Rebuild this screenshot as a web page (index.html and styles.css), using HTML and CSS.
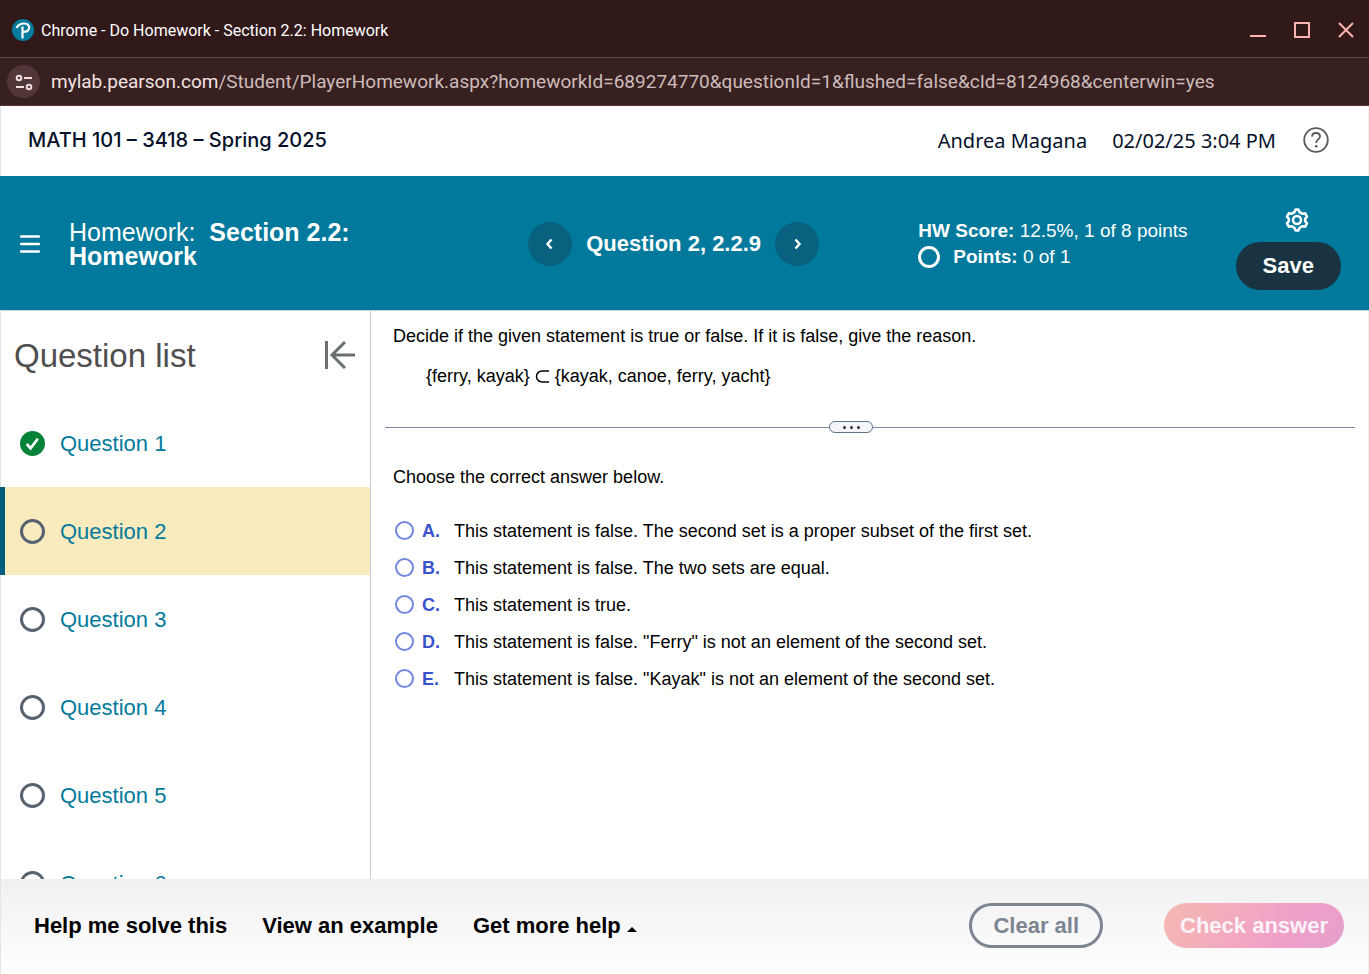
FILE: index.html
```html
<!DOCTYPE html>
<html lang="en">
<head>
    <meta charset="UTF-8">
    <meta name="viewport" content="width=device-width, initial-scale=1.0">
    <title>Do Homework - Section 2.2: Homework</title>
    <link rel="stylesheet" href="styles.css">
</head>
<body>
    <div class="titlebar">
        <svg class="logo" viewBox="0 0 22 22" aria-hidden="true">
            <circle cx="11" cy="11" r="11" fill="#047a9c"/>
            <path d="M10.500 19.500V7.500M4.500 9C6.500 5.500 9.500 4.300 12.500 4.500C15.800 4.800 17.300 6.600 17.100 9C16.900 11.600 14.500 13 11 12.700" fill="none" stroke="#fff" stroke-width="2.200"/>
        </svg>
        <span class="window-title">Chrome - Do Homework - Section 2.2: Homework</span>
        <button class="win-btn" aria-label="Minimize">
            <svg viewBox="0 0 16 16"><path d="M0 14H16" stroke-width="2"/></svg>
        </button>
        <button class="win-btn" aria-label="Maximize">
            <svg viewBox="0 0 16 16"><path d="M1 1H15V15H1Z" stroke-width="2"/></svg>
        </button>
        <button class="win-btn" aria-label="Close">
            <svg viewBox="0 0 16 16"><path d="M1 1L15 15M15 1L1 15" stroke-width="2"/></svg>
        </button>
    </div>
    <div class="urlbar">
        <button class="site-info" aria-label="View site information">
            <svg viewBox="0 0 18 18" fill="none" stroke="#f0dedd" stroke-width="2">
                <circle cx="4" cy="5" r="2.300"/>
                <path d="M9 5H17M1 14H9"/>
                <circle cx="14" cy="14" r="2.300"/>
            </svg>
        </button>
        <span class="url"><span class="host">mylab.pearson.com</span>/Student/PlayerHomework.aspx?homeworkId=689274770&amp;questionId=1&amp;flushed=false&amp;cId=8124968&amp;centerwin=yes</span>
    </div>

    <header class="course">
        <h1>MATH 101 – 3418 – Spring 2025</h1>
        <span class="user">Andrea Magana</span>
        <span class="date">02/02/25 3:04 PM</span>
        <button class="help" aria-label="Help">
            <svg viewBox="0 0 26 26" fill="none" stroke="#5b5b5b" stroke-width="1.800">
                <circle cx="13" cy="13" r="11.800"/>
                <path d="M9 9.600C9.200 7.200 10.800 6 13 6C15.400 6 17 7.400 17 9.500C17 12.300 13.200 12.600 13.200 16"/>
                <circle cx="13.200" cy="19.200" r="1.300" fill="#5b5b5b" stroke="none"/>
            </svg>
        </button>
    </header>

    <div class="hw-bar">
        <button class="menu" aria-label="Menu">
            <svg viewBox="0 0 20 18"><path d="M1 1.500H19M1 9H19M1 16.500H19" stroke="#fff" stroke-width="2.400" stroke-linecap="round"/></svg>
        </button>
        <h2 class="hw-title"><span>Homework:&nbsp;</span> Section 2.2: Homework</h2>
        <div class="pager">
            <button class="round" aria-label="Previous question">
                <svg viewBox="0 0 12 12"><path d="M7.500 1.500L3.500 6L7.500 10.500"/></svg>
            </button>
            <span class="current">Question 2, 2.2.9</span>
            <button class="round" aria-label="Next question">
                <svg viewBox="0 0 12 12"><path d="M4.500 1.500L8.500 6L4.500 10.500"/></svg>
            </button>
        </div>
        <div class="score">
            <div><b>HW Score:</b> 12.5%, 1 of 8 points</div>
            <div class="points"><i class="dot"></i><span><b>Points:</b> 0 of 1</span></div>
        </div>
        <div class="actions">
            <button class="gear" aria-label="Settings">
                <svg viewBox="0 0 24 24" fill="none" stroke="#fff" stroke-width="2.600" stroke-linejoin="round">
                    <path d="M10.600 1.500H13.400L14.600 4.200Q16.200 4.800 17.200 5.800L20.200 5.400L22 8.600L20.200 10.800V13.200L22 15.400L20.200 18.600L17.200 18.200Q16.200 19.200 14.600 19.800L13.400 22.500H10.600L9.400 19.800Q7.800 19.200 6.800 18.200L3.800 18.600L2 15.400L3.800 13.200V10.800L2 8.600L3.800 5.400L6.800 5.800Q7.800 4.800 9.400 4.200Z"/>
                    <circle cx="12" cy="12" r="4"/>
                </svg>
            </button>
            <button class="save">Save</button>
        </div>
    </div>

    <main>
        <aside>
            <div class="list-head">
                <h2>Question list</h2>
                <button aria-label="Collapse question list">
                    <svg viewBox="0 0 32 28" fill="none" stroke="#6a7070" stroke-width="3"><path d="M2.500 0V28M31 14H9M21 1L8 14L21 27"/></svg>
                </button>
            </div>
            <ul>
                <li>
                    <svg viewBox="0 0 26 26"><circle cx="13" cy="13" r="13" fill="#038238"/><path d="M7 13.500L11 18L18.500 8" fill="none" stroke="#fff" stroke-width="2.800"/></svg>
                    <a href="#q1">Question 1</a>
                </li>
                <li class="active"><i class="ring"></i><a href="#q2">Question 2</a></li>
                <li><i class="ring"></i><a href="#q3">Question 3</a></li>
                <li><i class="ring"></i><a href="#q4">Question 4</a></li>
                <li><i class="ring"></i><a href="#q5">Question 5</a></li>
                <li><i class="ring"></i><a href="#q6">Question 6</a></li>
            </ul>
        </aside>
        <section>
            <p class="prompt">Decide if the given statement is true or false. If it is false, give the reason.</p>
            <p class="sets">{ferry, kayak} <svg class="subset" viewBox="0 0 15 13" role="img" aria-label="is a proper subset of"><path d="M14 1H7A5.500 5.500 0 0 0 7 12H14" fill="none" stroke="#000" stroke-width="1.500"/></svg> {kayak, canoe, ferry, yacht}</p>
            <div class="divider">
                <button aria-label="Resize"><i></i><i></i><i></i></button>
            </div>
            <form>
                <p>Choose the correct answer below.</p>
                <label><input type="radio" name="answer" value="A"><b>A.</b>This statement is false. The second set is a proper subset of the first set.</label>
                <label><input type="radio" name="answer" value="B"><b>B.</b>This statement is false. The two sets are equal.</label>
                <label><input type="radio" name="answer" value="C"><b>C.</b>This statement is true.</label>
                <label><input type="radio" name="answer" value="D"><b>D.</b>This statement is false. "Ferry" is not an element of the second set.</label>
                <label><input type="radio" name="answer" value="E"><b>E.</b>This statement is false. "Kayak" is not an element of the second set.</label>
            </form>
        </section>
    </main>

    <footer>
        <button class="link">Help me solve this</button>
        <button class="link">View an example</button>
        <button class="link">Get more help <i class="caret"></i></button>
        <button class="clear">Clear all</button>
        <button class="check">Check answer</button>
    </footer>
</body>
</html>
```
FILE: styles.css
```css
* {
    box-sizing: border-box;
}
body {
    margin: 0;
    height: 100vh;
    display: flex;
    flex-direction: column;
    overflow: hidden;
    font-family: "Liberation Sans", Arial, sans-serif;
    background: #fff;
    color: #000;
}
h1, h2, p, ul {
    margin: 0;
    padding: 0;
    font-weight: normal;
}
button {
    font-family: inherit;
    background: none;
    border: 0;
    padding: 0;
    cursor: pointer;
}
svg {
    display: block;
}

/* browser window */
.titlebar {
    display: flex;
    align-items: center;
    flex: none;
    height: 58px;
    padding: 2px 15px 0 12px;
    background: #31191a;
    border-bottom: 1px solid #5e4546;
    color: #fff;
    font: 16px Roboto, sans-serif;
}
.logo {
    width: 22px;
    height: 22px;
    margin-right: 7px;
}
.window-title {
    flex: 1;
    padding-top: 1px;
}
.win-btn {
    margin-left: 28px;
}
.win-btn svg {
    width: 16px;
    height: 16px;
    fill: none;
    stroke: #ffb3b0;
}
.urlbar {
    display: flex;
    align-items: center;
    flex: none;
    height: 48px;
    padding-left: 7px;
    background: #382021;
    border-bottom: 1px solid #543a3b;
    font: 19px Roboto, sans-serif;
    color: #cdbcbb;
    white-space: nowrap;
}
.site-info {
    display: grid;
    place-items: center;
    width: 33px;
    height: 33px;
    margin-right: 11px;
    border-radius: 50%;
    background: #523638;
}
.site-info svg {
    width: 18px;
    height: 18px;
}
.host {
    color: #f3e3e2;
}

/* thin window frame at both sides */
.course, main, footer {
    box-shadow: inset 1px 0 #e6e6e6, inset -1px 0 #f0f0f0;
}

/* course header */
.course {
    display: flex;
    align-items: center;
    flex: none;
    height: 70px;
    padding: 0 40px 2px 28px;
    color: #05112a;
    font: 20px "Noto Sans", sans-serif;
}
.course h1 {
    flex: 1;
    font: 500 20px Inter, sans-serif;
}
.date {
    margin: 0 27px 0 25px;
}
.help svg {
    width: 26px;
    height: 26px;
}

/* homework bar */
.hw-bar {
    display: flex;
    align-items: center;
    flex: none;
    height: 135px;
    padding: 2px 28px 0 20px;
    background: #00799c;
    border-bottom: 1px solid #c7d3de;
    color: #fff;
}
.menu svg {
    width: 20px;
    height: 18px;
}
.hw-title {
    width: 360px;
    margin-left: 29px;
    font-size: 25px;
    line-height: 24px;
    font-weight: bold;
}
.hw-title span {
    font-weight: normal;
}
.pager {
    display: flex;
    align-items: center;
    margin: 0 auto;
}
.round {
    display: grid;
    place-items: center;
    width: 44px;
    height: 44px;
    border-radius: 50%;
    background: #08627f;
}
.round svg {
    width: 12px;
    height: 12px;
    fill: none;
    stroke: #fff;
    stroke-width: 2.4;
}
.current {
    margin: 0 14px;
    font-size: 22px;
    font-weight: bold;
}
.score {
    font-size: 19px;
    line-height: 26px;
}
.points {
    display: flex;
    align-items: center;
    gap: 13px;
}
.dot {
    width: 22px;
    height: 22px;
    border: 3px solid #fff;
    border-radius: 50%;
}
.actions {
    display: flex;
    flex-direction: column;
    align-items: center;
    gap: 10px;
    margin: 10px 0 0 48px;
}
.gear {
    margin-left: 18px;
}
.gear svg {
    width: 24px;
    height: 24px;
}
.save {
    height: 48px;
    padding: 0 27px;
    border-radius: 24px;
    background: #193343;
    color: #fff;
    font-size: 22px;
    font-weight: bold;
}

/* question list */
main {
    display: flex;
    flex: 1;
    min-height: 0;
}
aside {
    width: 371px;
    flex: none;
    overflow: hidden;
    border-right: 1px solid #c3cbda;
}
.list-head {
    display: flex;
    align-items: center;
    justify-content: space-between;
    height: 88px;
    padding: 0 14px;
}
.list-head h2 {
    padding-top: 2px;
    font-size: 33px;
    color: #4f4f4f;
}
.list-head svg {
    width: 32px;
    height: 28px;
}
aside li {
    display: flex;
    align-items: center;
    gap: 15px;
    height: 88px;
    padding-left: 15px;
    border-left: 5px solid transparent;
}
aside li.active {
    background: #f9ebbd;
    border-color: #005d7b;
}
aside li svg,
.ring {
    width: 25px;
    height: 25px;
}
.ring {
    border: 3px solid #566270;
    border-radius: 50%;
}
aside a {
    padding-top: 2px;
    font-size: 22px;
    color: #047a9c;
    text-decoration: none;
}

/* question */
section {
    flex: 1;
    padding: 12px 14px;
    font-size: 18px;
    line-height: 26px;
}
.prompt {
    padding-left: 8px;
}
.sets {
    padding: 14px 0 0 41px;
}
.subset {
    display: inline;
    width: 15px;
    height: 13px;
    vertical-align: -1px;
}
.divider {
    display: flex;
    align-items: center;
    height: 12px;
    margin-top: 32px;
}
.divider::before,
.divider::after {
    content: "";
    flex: 12;
    height: 1px;
    background: #8088a2;
}
.divider::after {
    flex: 13;
}
.divider button {
    display: flex;
    align-items: center;
    justify-content: center;
    gap: 4px;
    width: 44px;
    height: 12px;
    border: 1px solid #5f7386;
    border-radius: 6px;
    background: #f3f5f8;
}
.divider i {
    width: 3px;
    height: 3px;
    border-radius: 50%;
    background: #333;
}
form {
    padding: 31px 8px 0;
}
form p {
    margin-bottom: 22px;
}
form label {
    display: flex;
    align-items: center;
    height: 37px;
}
form input {
    appearance: none;
    width: 19px;
    height: 19px;
    margin: 0 8px 0 2px;
    border: 2px solid #7388de;
    border-radius: 50%;
}
form input:checked {
    background: #3a53cc;
}
form b {
    width: 32px;
    color: #3a53cc;
}

/* bottom toolbar */
footer {
    display: flex;
    align-items: center;
    flex: none;
    height: 95px;
    padding: 0 25px 2px 34px;
    background: linear-gradient(#f0f0f0, #fff);
}
footer button {
    font-size: 22px;
    font-weight: bold;
}
.link {
    margin-right: 35px;
    color: #000;
}
.caret {
    display: inline-block;
    border: 5px solid transparent;
    border-top: 0;
    border-bottom-color: #000;
    vertical-align: 1px;
}
.clear {
    height: 45px;
    margin-left: auto;
    padding: 0 21px;
    border: 3px solid #7d8593;
    border-radius: 23px;
    color: #7d8593;
}
.check {
    height: 45px;
    margin-left: 61px;
    padding: 0 16px;
    border-radius: 23px;
    background: linear-gradient(120deg, #f5b9b0, #f0a0c8 65%, #e49fcb);
    color: #fcf3f8;
}
```
